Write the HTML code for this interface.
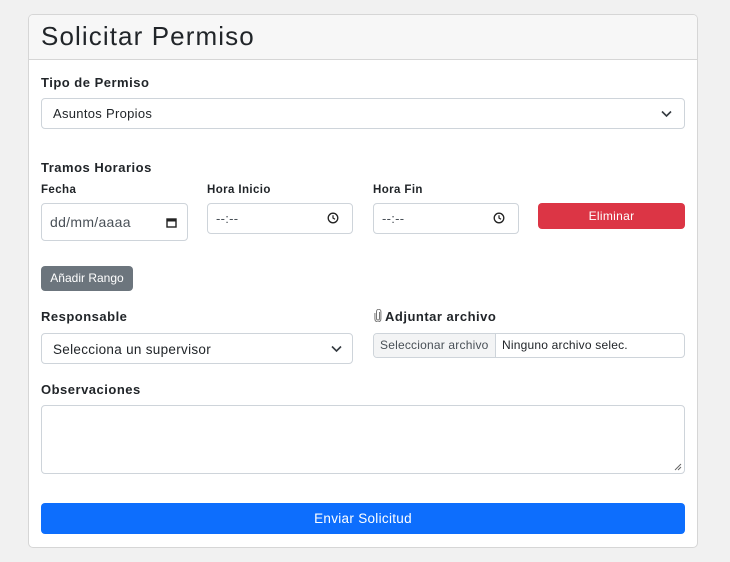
<!DOCTYPE html>
<html><head><meta charset="utf-8"><style>
*{box-sizing:border-box;margin:0;padding:0}
body{width:730px;height:562px;background:#f1f1f1;font-family:"Liberation Sans",sans-serif;color:#212529;position:relative;overflow:hidden}
.card{position:absolute;left:28px;top:14px;width:670px;height:534px;background:#fff;border:1px solid #d6d6d6;border-radius:5px;overflow:hidden}
.hd{position:absolute;left:0;top:0;width:100%;height:45px;background:#f7f7f7;border-bottom:1px solid #d6d6d6}
.hd h1{position:absolute;left:12px;top:6px;font-size:26px;font-weight:normal;color:#212529;letter-spacing:1.1px}
.a{position:absolute}
.lb{font-size:13px;font-weight:bold;color:#212529;letter-spacing:0.5px}
.sl{font-size:11.5px;font-weight:bold;letter-spacing:0.4px}
.in{border:1px solid #ced4da;border-radius:4px;background:#fff;font-size:13px;color:#495057;letter-spacing:0.3px}
.btn{color:#fff;border-radius:4px;font-size:12px;text-align:center;letter-spacing:0.3px}
</style></head><body>
<div class="card"><div class="hd"><h1>Solicitar Permiso</h1></div></div>

<div class="a lb" style="left:41px;top:75px">Tipo de Permiso</div>
<div class="a in" style="left:41px;top:98px;width:644px;height:31px;padding:7px 11px;color:#212529">Asuntos Propios
<svg class="a" style="right:12px;top:11px" width="11" height="8" viewBox="0 0 11 8"><path d="M1 1.5l4.5 4.5 4.5-4.5" fill="none" stroke="#343a40" stroke-width="1.6"/></svg></div>

<div class="a lb" style="left:41px;top:160px">Tramos Horarios</div>
<div class="a sl" style="left:41px;top:184px">Fecha</div>
<div class="a sl" style="left:207px;top:184px">Hora Inicio</div>
<div class="a sl" style="left:373px;top:184px">Hora Fin</div>

<div class="a in" style="left:41px;top:203px;width:147px;height:38px;padding:10px 8px;font-size:14px">dd/mm/aaaa
<svg class="a" style="left:124px;top:13px" width="11" height="11" viewBox="0 0 11 11"><rect x="1" y="2" width="9" height="8" fill="none" stroke="#222" stroke-width="1.4"/><rect x="1" y="2" width="9" height="2.5" fill="#222"/></svg></div>
<div class="a in" style="left:207px;top:203px;width:146px;height:31px;padding:7px 8px">--:--
<svg class="a" style="left:119px;top:8px" width="12" height="12" viewBox="0 0 12 12"><circle cx="6" cy="6" r="4.8" fill="none" stroke="#222" stroke-width="1.3"/><path d="M6 3.2V6l2 1.3" fill="none" stroke="#222" stroke-width="1.2"/></svg></div>
<div class="a in" style="left:373px;top:203px;width:146px;height:31px;padding:7px 8px">--:--
<svg class="a" style="left:119px;top:8px" width="12" height="12" viewBox="0 0 12 12"><circle cx="6" cy="6" r="4.8" fill="none" stroke="#222" stroke-width="1.3"/><path d="M6 3.2V6l2 1.3" fill="none" stroke="#222" stroke-width="1.2"/></svg></div>
<div class="a btn" style="left:538px;top:203px;width:147px;height:26px;background:#dc3545;line-height:26px">Eliminar</div>

<div class="a btn" style="left:41px;top:266px;width:92px;height:25px;background:#6c757d;line-height:25px;font-size:12px;letter-spacing:0">Añadir Rango</div>

<div class="a lb" style="left:41px;top:309px">Responsable</div>
<svg class="a" style="left:374px;top:309px" width="8" height="13" viewBox="0 0 8 13"><path d="M5.5 3v6.5a1.5 1.5 0 0 1-3 0V2.5a2.2 2.2 0 0 1 4.4 0v7.5a3 3 0 0 1-6 0V4" fill="none" stroke="#777" stroke-width="1"/></svg>
<div class="a lb" style="left:385px;top:309px">Adjuntar archivo</div>
<div class="a in" style="left:41px;top:333px;width:312px;height:31px;padding:8px 11px;font-size:13.5px;color:#212529">Selecciona un supervisor
<svg class="a" style="right:10px;top:11px" width="11" height="8" viewBox="0 0 11 8"><path d="M1 1.5l4.5 4.5 4.5-4.5" fill="none" stroke="#343a40" stroke-width="1.6"/></svg></div>
<div class="a in" style="left:373px;top:333px;width:312px;height:25px;font-size:12px;overflow:hidden;letter-spacing:0.2px">
<div class="a" style="left:0;top:0;width:122px;height:23px;background:#f3f4f5;border-right:1px solid #ced4da;padding:4px 6px;color:#495057">Seleccionar archivo</div>
<div class="a" style="left:128px;top:4px;color:#212529">Ninguno archivo selec.</div></div>

<div class="a lb" style="left:41px;top:382px">Observaciones</div>
<div class="a in" style="left:41px;top:405px;width:644px;height:69px">
<svg class="a" style="right:2px;bottom:2px" width="8" height="8" viewBox="0 0 8 8"><path d="M7 1L1 7M7 4L4 7" stroke="#666" stroke-width="1"/></svg></div>

<div class="a btn" style="left:41px;top:503px;width:644px;height:31px;background:#0d6efd;line-height:31px;font-size:13.5px">Enviar Solicitud</div>
</body></html>
